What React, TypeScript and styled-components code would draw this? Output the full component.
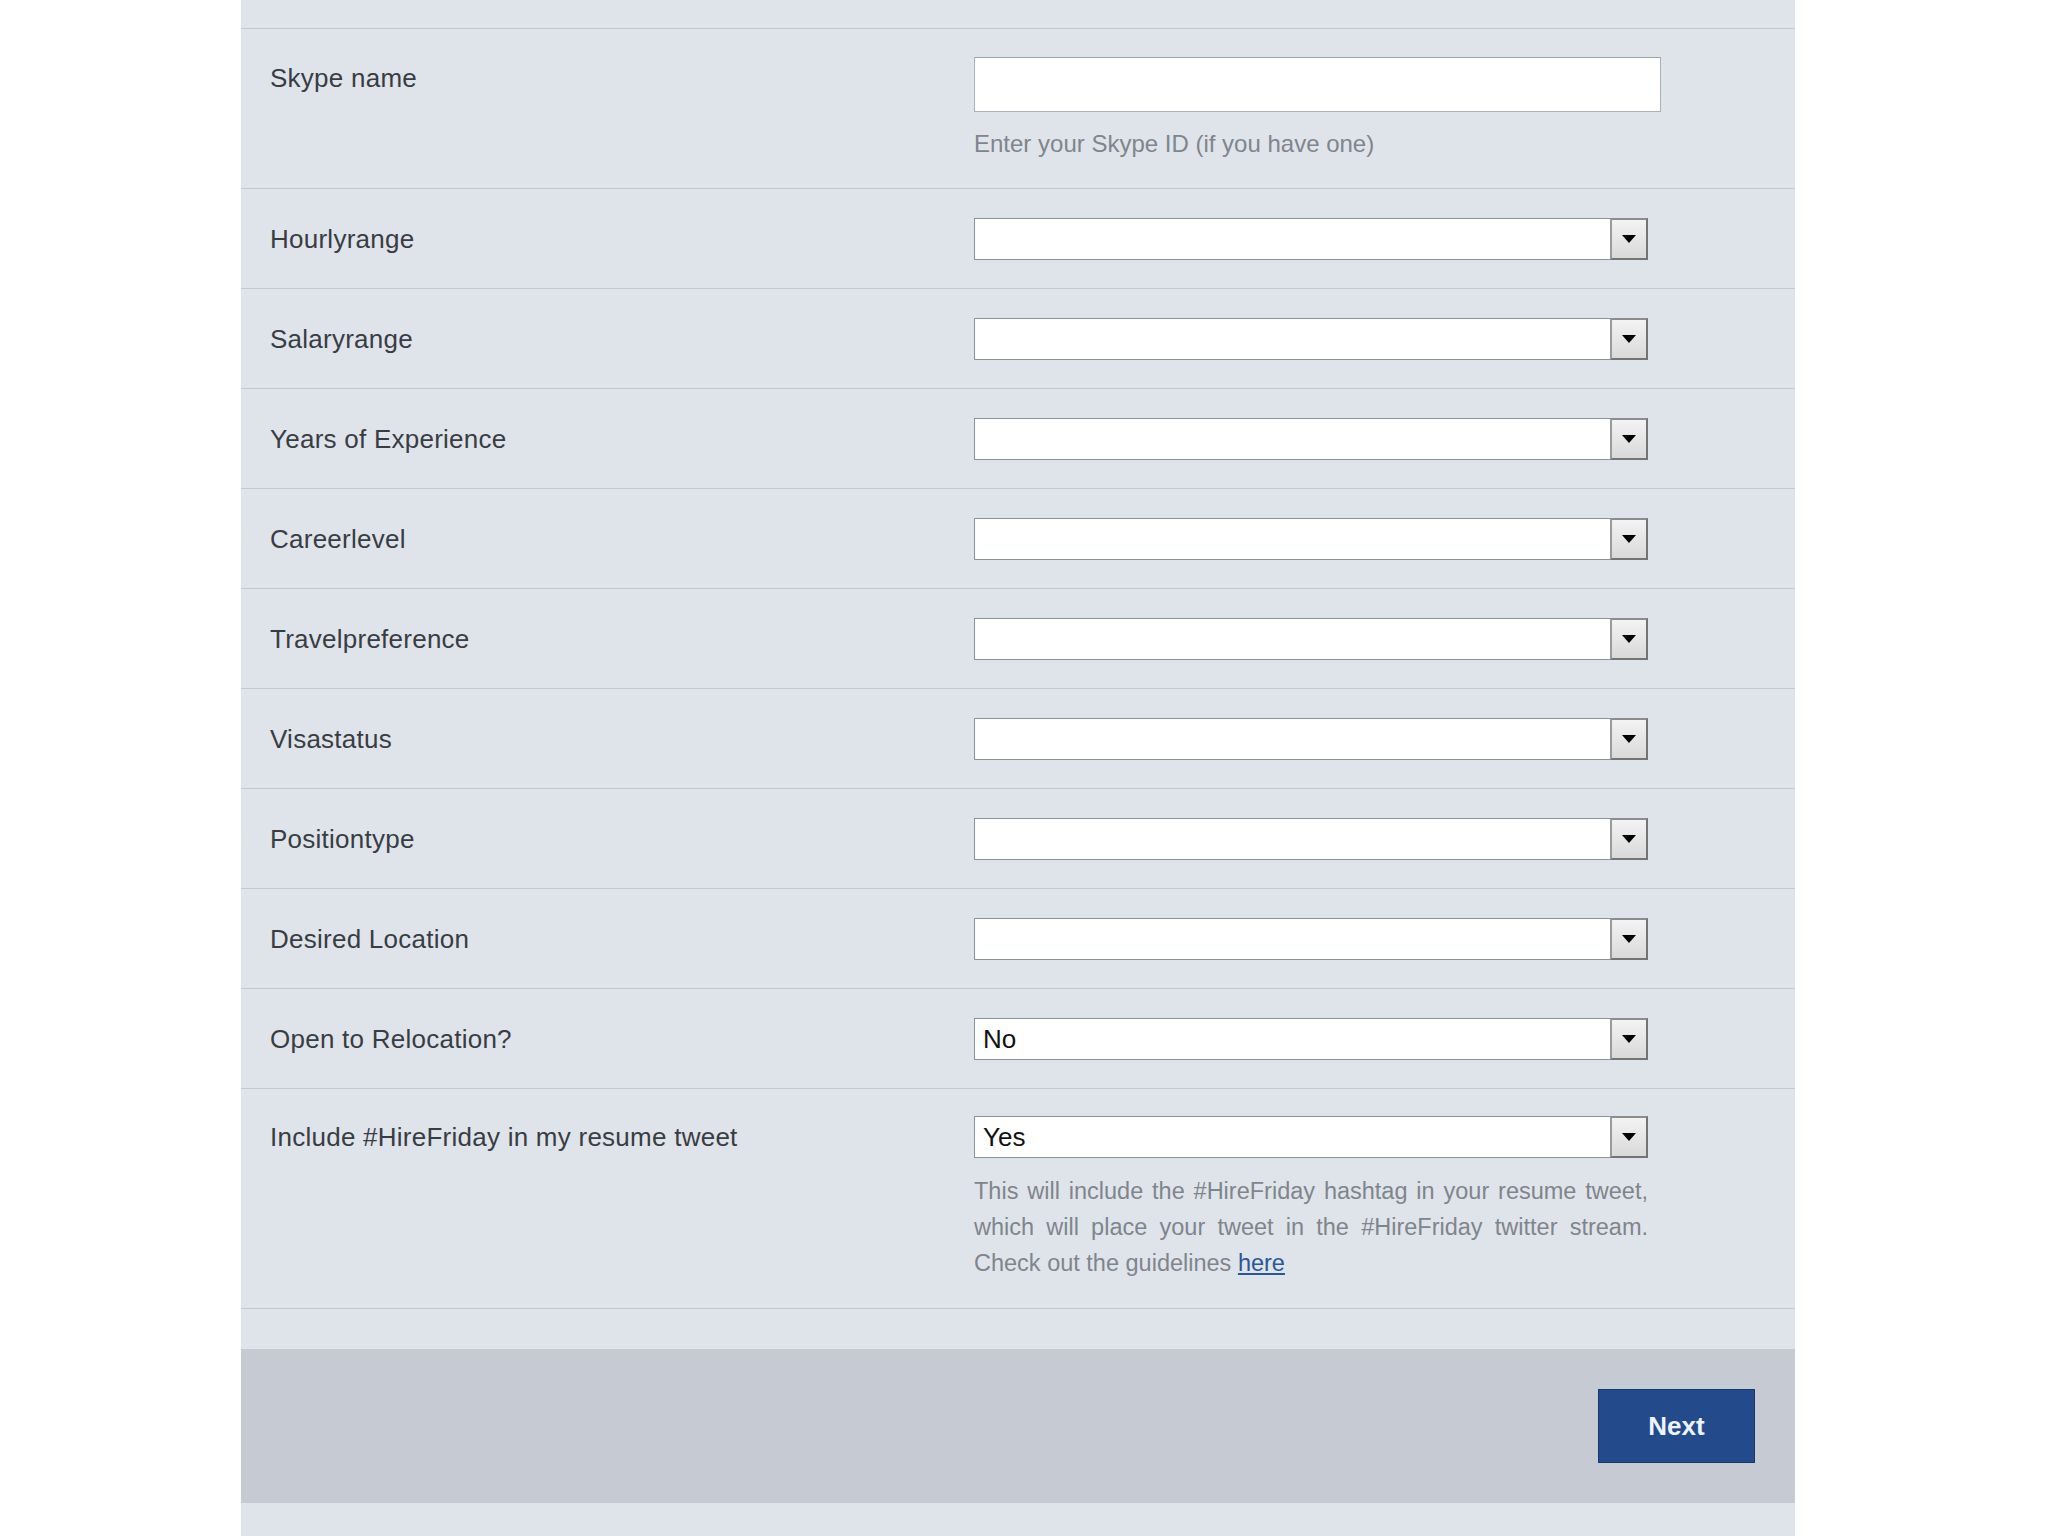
import styled, { createGlobalStyle } from 'styled-components'

const GlobalStyle = createGlobalStyle`
  body {
    margin: 0;
    background: #ffffff;
    font-family: 'Liberation Sans', Arial, sans-serif;
  }
`

const Panel = styled.div`
  width: 1554px;
  min-height: 1536px;
  margin-left: 241px;
  background: #dfe4ea;
`

const TopStrip = styled.div`
  height: 28px;
  border-bottom: 1px solid #c3c9d0;
`

const Row = styled.div<{ $top?: number; $bottom?: number }>`
  display: grid;
  grid-template-columns: 733px 1fr;
  align-items: start;
  padding: ${(p) => `${p.$top ?? 28}px 0 ${p.$bottom ?? 28}px`};
  border-bottom: 1px solid #c3c9d0;
`

const Label = styled.div`
  padding-left: 29px;
  font-size: 26px;
  line-height: 42px;
  letter-spacing: 0.25px;
  color: #383d43;
`

const Field = styled.div`
  display: flex;
  flex-direction: column;
`

const TextInput = styled.div`
  width: 687px;
  height: 55px;
  box-sizing: border-box;
  background: #ffffff;
  border: 1px solid #aab1b9;
  border-top-color: #9aa2ab;
`

const Select = styled.div`
  width: 674px;
  height: 42px;
  box-sizing: border-box;
  display: flex;
  align-items: center;
  background: #ffffff;
  border: 1px solid #8a939d;
  border-right: none;
`

const SelectValue = styled.span`
  flex: 1;
  padding-left: 8px;
  font-size: 26px;
  color: #111111;
`

const ArrowBox = styled.div`
  width: 38px;
  height: 42px;
  box-sizing: border-box;
  display: flex;
  align-items: center;
  justify-content: center;
  border: 2px solid #747474;
  border-top-color: #8c8c8c;
  border-left-color: #9a9a9a;
  background: linear-gradient(#f3f3f3, #d9d9d9);
`

const Hint = styled.div`
  margin-top: 16px;
  font-size: 24px;
  line-height: 32px;
  color: #7f858c;
`

const Help = styled.div`
  width: 674px;
  margin-top: 15px;
  font-size: 23.5px;
  line-height: 36px;
  color: #7f858c;
`

const HelpLine = styled.div<{ $justify?: boolean }>`
  text-align: justify;
  text-align-last: ${(p) => (p.$justify ? 'justify' : 'left')};
  a {
    color: #2b5797;
    text-decoration: underline;
  }
`

const Spacer = styled.div`
  height: 40px;
`

const Footer = styled.div`
  height: 154px;
  display: flex;
  align-items: center;
  justify-content: flex-end;
  padding-right: 40px;
  background: #c6cbd3;
`

const NextButton = styled.button`
  width: 157px;
  height: 74px;
  border: 1px solid #17386d;
  background: #234a8a;
  color: #eef4fb;
  font-family: 'Liberation Sans', Arial, sans-serif;
  font-size: 26px;
  font-weight: 700;
  cursor: pointer;
`

const Arrow = () => (
  <svg width='14' height='8' viewBox='0 0 14 8'>
    <path d='M0 0 H14 L7 8 Z' fill='#000' />
  </svg>
)

const Dropdown = ({ value }: { value?: string }) => (
  <Select>
    <SelectValue>{value}</SelectValue>
    <ArrowBox>
      <Arrow />
    </ArrowBox>
  </Select>
)

const selectRows: { label: string; value?: string }[] = [
  { label: 'Hourlyrange' },
  { label: 'Salaryrange' },
  { label: 'Years of Experience' },
  { label: 'Careerlevel' },
  { label: 'Travelpreference' },
  { label: 'Visastatus' },
  { label: 'Positiontype' },
  { label: 'Desired Location' },
  { label: 'Open to Relocation?', value: 'No' },
]

const App = () => {
  return (
    <>
      <GlobalStyle />
      <Panel>
        <TopStrip />
        <Row>
          <Label>Skype name</Label>
          <Field>
            <TextInput />
            <Hint>Enter your Skype ID (if you have one)</Hint>
          </Field>
        </Row>
        {selectRows.map((r) => (
          <Row key={r.label} $top={29} $bottom={28}>
            <Label>{r.label}</Label>
            <Field>
              <Dropdown value={r.value} />
            </Field>
          </Row>
        ))}
        <Row $top={27} $bottom={27}>
          <Label>Include #HireFriday in my resume tweet</Label>
          <Field>
            <Dropdown value='Yes' />
            <Help>
              <HelpLine $justify>
                This will include the #HireFriday hashtag in your resume tweet,
              </HelpLine>
              <HelpLine $justify>
                which will place your tweet in the #HireFriday twitter stream.
              </HelpLine>
              <HelpLine>
                Check out the guidelines <a href='#'>here</a>
              </HelpLine>
            </Help>
          </Field>
        </Row>
        <Spacer />
        <Footer>
          <NextButton>Next</NextButton>
        </Footer>
      </Panel>
    </>
  )
}

export default App
